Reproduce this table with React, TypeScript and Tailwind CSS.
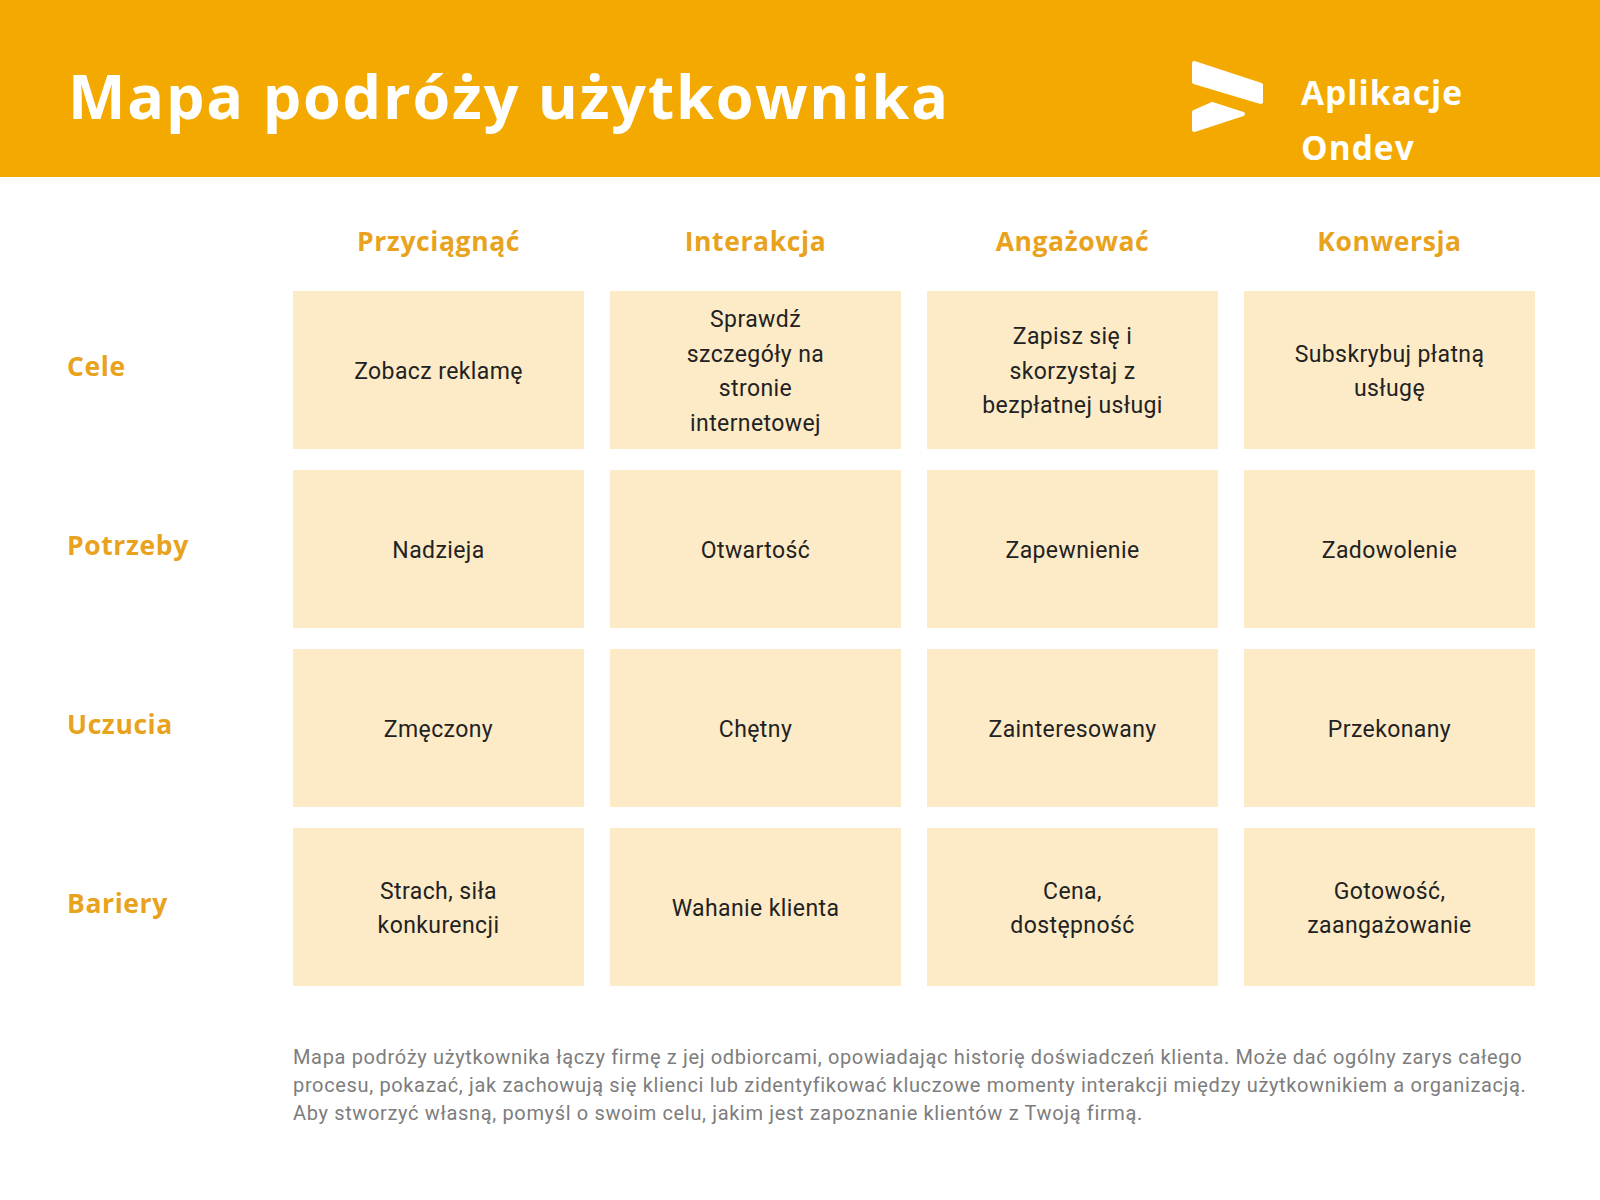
import React from 'react';

const columns = ['Przyciągnąć', 'Interakcja', 'Angażować', 'Konwersja'];

const rows: { label: string; cells: string[][] }[] = [
    {
        label: 'Cele',
        cells: [
            ['Zobacz reklamę'],
            ['Sprawdź', 'szczegóły na', 'stronie', 'internetowej'],
            ['Zapisz się i', 'skorzystaj z', 'bezpłatnej usługi'],
            ['Subskrybuj płatną', 'usługę'],
        ],
    },
    {
        label: 'Potrzeby',
        cells: [['Nadzieja'], ['Otwartość'], ['Zapewnienie'], ['Zadowolenie']],
    },
    {
        label: 'Uczucia',
        cells: [['Zmęczony'], ['Chętny'], ['Zainteresowany'], ['Przekonany']],
    },
    {
        label: 'Bariery',
        cells: [
            ['Strach, siła', 'konkurencji'],
            ['Wahanie klienta'],
            ['Cena,', 'dostępność'],
            ['Gotowość,', 'zaangażowanie'],
        ],
    },
];

function Logo() {
    return (
        <svg width="76" height="76" viewBox="0 0 76 76" fill="white" stroke="white" strokeWidth="4" strokeLinejoin="round">
            <path d="M4 5 L71 27 L71 44 L4 24 Z" />
            <path d="M4 54 L22 46 L53 56 L4 72 Z" />
        </svg>
    );
}

export default function App() {
    return (
        <div className="w-[1600px] h-[1200px] bg-white font-['Open_Sans',sans-serif]">
            {/* Header */}
            <div className="h-[177px] bg-[#F4A900] flex justify-between">
                <h1 className="pl-[68px] pt-[56px] text-[61px] leading-[80px] font-bold text-white tracking-[1.8px]">
                    Mapa podróży użytkownika
                </h1>
                <div className="flex pr-[137px] pt-[58px]">
                    <Logo />
                    <div className="ml-[35px] pt-[7px] text-[33.5px] leading-[55px] font-bold text-white tracking-[1px]">
                        Aplikacje
                        <br />
                        Ondev
                    </div>
                </div>
            </div>

            {/* Grid */}
            <div className="pl-[67px] grid grid-cols-[200px_291px_291px_291px_291px] gap-x-[26px]">
                <div />
                {columns.map((c) => (
                    <div key={c} className="h-[114px] pt-[44px] text-center text-[26.5px] leading-[40px] font-bold text-[#E8A21C] tracking-[0.6px]">
                        {c}
                    </div>
                ))}
                {rows.map((r) => (
                    <React.Fragment key={r.label}>
                        <div className="flex items-center pb-[6px] text-[26.5px] font-bold text-[#E8A21C] tracking-[0.6px] mb-[21px]">
                            {r.label}
                        </div>
                        {r.cells.map((lines, i) => (
                            <div
                                key={i}
                                className="h-[158px] mb-[21px] pt-[4px] bg-[#FDEBC7] flex flex-col items-center justify-center text-center font-['Roboto',sans-serif] text-[23px] leading-[34.5px] text-[#222] tracking-[0.4px]"
                            >
                                {lines.map((l) => (
                                    <span key={l}>{l}</span>
                                ))}
                            </div>
                        ))}
                    </React.Fragment>
                ))}
            </div>

            {/* Description */}
            <p className="pl-[293px] pt-[36px] font-['Roboto',sans-serif] text-[20px] leading-[28px] text-[#7d7d7d] tracking-[0.65px]">
                Mapa podróży użytkownika łączy firmę z jej odbiorcami, opowiadając historię doświadczeń klienta. Może dać ogólny zarys całego
                <br />
                procesu, pokazać, jak zachowują się klienci lub zidentyfikować kluczowe momenty interakcji między użytkownikiem a organizacją.
                <br />
                Aby stworzyć własną, pomyśl o swoim celu, jakim jest zapoznanie klientów z Twoją firmą.
            </p>
        </div>
    );
}
